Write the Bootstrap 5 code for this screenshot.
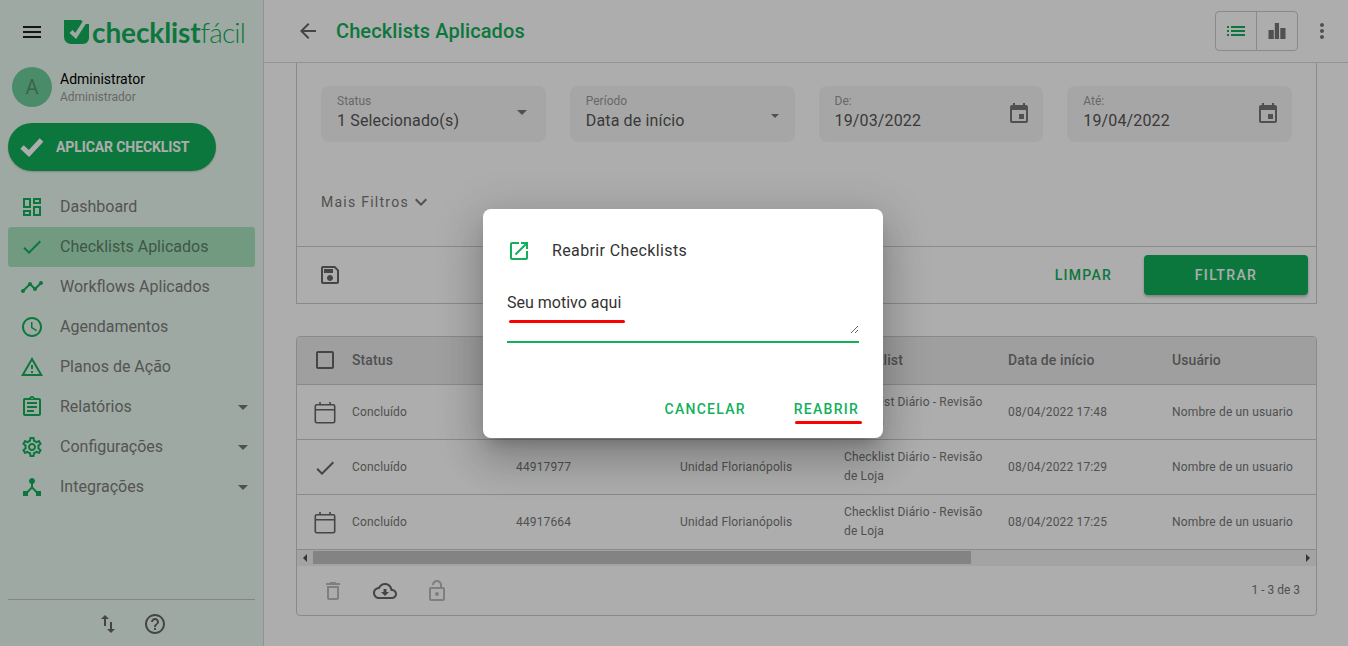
<!DOCTYPE html>
<html lang="pt-BR">
<head>
<meta charset="utf-8">
<title>Checklists Aplicados</title>
<link href="https://cdn.jsdelivr.net/npm/bootstrap@5.3.0/dist/css/bootstrap.min.css" rel="stylesheet">
<style>
html,body{height:646px;overflow:hidden;margin:0;background:#fff;font-family:Roboto,"Liberation Sans",sans-serif;color:rgba(0,0,0,.87)}
.ico{width:24px;height:24px;fill:currentColor;flex:none;display:block}
.shell{height:646px;width:1348px;position:relative}
.side{width:264px;flex:none;background:#eafaf0;border-right:1px solid #d8d8d8;height:646px}
.side-top{height:63px;padding:0 0 0 20px;gap:20px}
.logo-word{font-family:Lato,Roboto,sans-serif;font-size:28px;line-height:32px;color:#12b05b;letter-spacing:-.1px;white-space:nowrap;margin-left:-17px}
.logo-word b{font-weight:700}.logo-word span{font-weight:300;letter-spacing:-.8px}
.who{padding:0 12px;gap:8px;height:48px}
.who-txt{padding-top:2px}
.avatar{width:40px;height:40px;border-radius:50%;background:#6ecf9b;color:#58936f;font-size:20px;flex:none}
.who-name{font-size:14px;line-height:16px;color:#000}
.who-role{font-size:12px;line-height:16px;color:#999;margin-top:2px}
.apply{margin:12px 0 0 8px;width:208px;height:48px;border-radius:24px;background:#12b05b;color:#fff;font-size:14px;font-weight:700;border:0;padding:0 0 0 12px;gap:12px;letter-spacing:-.1px;box-shadow:0 1px 2px rgba(0,0,0,.2)}
.menu{margin-top:16px;padding:0 8px}
.menu-row{height:40px;padding:0 0 0 12px;gap:16px;border-radius:3px;color:#7c7c7c;font-size:16px}
.menu-row .ico{color:#12b05b}
.menu-row.on{background:#a9e4bf;color:#5c8069}
.caret-d{width:0;height:0;border-left:5px solid transparent;border-right:5px solid transparent;border-top:5px solid #777;margin:0 7px 0 auto}
.side-foot{margin:0 8px;border-top:1px solid #c4c4c4;height:47px;gap:23px;color:#666;padding:2px 1px 0 0}
.bar{height:63px;border-bottom:1px solid #d8d8d8;padding:0 14px 0 32px;background:#fff}
.bar-title{font-size:20px;font-weight:500;color:#12b05b;margin-left:16px;letter-spacing:.1px}
.bar-back{color:#666}
.seg{border:1px solid #ccc;border-radius:4px;height:40px;width:83px}
.seg-cell{flex:1;color:#777}.seg-cell+.seg-cell{border-left:1px solid #ccc}
.seg-cell.on{color:#12b05b}
.dots{color:#777;margin-left:12px}
.work{padding:0 31px 0 32px;height:583px;overflow:hidden}
.filt{border:1px solid #ccc;border-top:0;height:241px}
.filt-top{padding:23px 24px 0;gap:24px}
.fld{flex:1;height:56px;background:#f5f5f5;border-radius:8px;padding:8px 16px 0;position:relative}
.fld-l{font-size:12px;line-height:14px;color:#999}
.fld-v{font-size:16px;line-height:24px;color:#555;letter-spacing:.15px;margin-top:1px}
.fld .ico{position:absolute;right:12px;top:16px;color:#777}
.fld .caret-d{position:absolute;right:19px;top:24px;margin:0}
.fld .caret-low{right:16px;top:28px;border-left-width:4.5px;border-right-width:4.5px;border-top-width:4.5px}
.more{padding:48px 24px 0;height:94px;font-size:14px;color:#777;letter-spacing:1.25px;line-height:24px}
.filt-foot{border-top:1px solid #ccc;height:57px;padding:0 8px 0 21px;margin-top:10px}
.save-ico{color:#666}
.btn-clean{font-size:14px;font-weight:500;letter-spacing:1.25px;color:#12b05b}
.btn-go{background:#12b05b;color:#fff;width:164px;height:40px;border-radius:4px;font-size:14px;font-weight:500;letter-spacing:1.35px;margin-left:32px;box-shadow:0 2px 3px rgba(0,0,0,.25)}
.tbl-card{border:1px solid #ccc;border-radius:4px;margin-top:32px;height:280px;overflow:hidden}
.tbl-wrap{overflow:hidden;height:213px}
.grid-t{table-layout:fixed;width:1039px;margin:0;border-collapse:collapse}
.grid-t th,.grid-t td{border-bottom:1px solid #ccc;padding:0;background:transparent;vertical-align:middle;box-shadow:none}
.grid-t th{height:47px;background:#ebebeb;font-size:14px;font-weight:500;color:#777;letter-spacing:.1px}
.grid-t td{height:55px;padding-top:2px;font-size:12px;line-height:19px;color:#777;letter-spacing:.15px}
.grid-t .c0{width:55px;padding-left:16px}.grid-t .cn{width:164px}
.grid-t .c0 .ico{color:#666}
.grid-t td.cl{padding-right:18px;padding-top:0}
.cal-line{fill:none;stroke:currentColor;stroke-width:1.6}
.sbar{height:16px;background:#f1f1f1}
.sbar-thumb{width:658px;height:13px;background:#c1c1c1;margin-top:1px}
.sarrow{width:16px;height:16px}
.sarrow-l{width:0;height:0;border-top:4px solid transparent;border-bottom:4px solid transparent;border-right:4px solid #505050}
.sarrow-r{width:0;height:0;border-top:4px solid transparent;border-bottom:4px solid transparent;border-left:4px solid #505050}
.tbl-foot{height:49px;padding:0 16px 1px 24px;font-size:12px;color:#777;gap:28px}
.tbl-foot .ico{margin-top:2px}
.tbl-foot .faint{color:#bbb}.tbl-foot .dark{color:#666}
.veil{position:absolute;inset:0;background:rgba(0,0,0,.32);padding-left:18px;z-index:5}
.dlg{width:400px;height:229px;background:#fff;border-radius:8px;padding:24px;position:relative;box-shadow:0 11px 15px -7px rgba(0,0,0,.2),0 24px 38px 3px rgba(0,0,0,.14),0 9px 46px 8px rgba(0,0,0,.12)}
.dlg-head{height:36px;gap:21px;color:#333;font-size:16px;letter-spacing:.37px}
.dlg-head .ico{color:#12b05b}
.dlg-field{margin-top:22px;border-bottom:2px solid #12b05b;padding-bottom:7px}
.dlg-area{display:block;width:100%;height:43px;border:0;border-radius:0;padding:0;font-size:16px;line-height:24px;color:#333;background:transparent;outline:0;font-family:Roboto,sans-serif;box-shadow:none}
.dlg-foot{margin-top:57px;gap:48px;font-size:14px;font-weight:500;letter-spacing:1.25px;color:#12b05b;line-height:18px}
.red-a,.red-b{position:absolute;height:3px;border-radius:2px;background:#f00}
.red-a{left:26px;top:111px;width:116px}
.red-b{left:312px;top:212px;width:67px}
</style>
</head>
<body>
<svg width="0" height="0" class="d-none">
<symbol id="i-menu" viewBox="0 0 24 24"><path d="M3 18h18v-2H3v2zm0-5h18v-2H3v2zm0-7v2h18V6H3z"/></symbol>
<symbol id="i-dash" viewBox="0 0 24 24"><path d="M19 5v2h-4V5h4M9 5v6H5V5h4m10 8v6h-4v-6h4M9 17v2H5v-2h4M21 3h-8v6h8V3zM11 3H3v10h8V3zm10 8h-8v10h8V11zm-10 4H3v6h8v-6z"/></symbol>
<symbol id="i-check" viewBox="0 0 24 24"><path d="M9 16.17L4.83 12l-1.42 1.41L9 19 21 7l-1.41-1.41z"/></symbol>
<symbol id="i-time" viewBox="0 0 24 24"><path d="M23 8c0 1.1-.9 2-2 2-.18 0-.35-.02-.51-.07l-3.56 3.55c.05.16.07.34.07.52 0 1.1-.9 2-2 2s-2-.9-2-2c0-.18.02-.36.07-.52l-2.55-2.55c-.16.05-.34.07-.52.07s-.36-.02-.52-.07l-4.55 4.56c.05.16.07.33.07.51 0 1.1-.9 2-2 2s-2-.9-2-2 .9-2 2-2c.18 0 .35.02.51.07l4.56-4.55C8.02 9.36 8 9.18 8 9c0-1.1.9-2 2-2s2 .9 2 2c0 .18-.02.36-.07.52l2.55 2.55c.16-.05.34-.07.52-.07s.36.02.52.07l3.55-3.56C19.02 8.35 19 8.18 19 8c0-1.1.9-2 2-2s2 .9 2 2z"/></symbol>
<symbol id="i-clock" viewBox="0 0 24 24"><path d="M11.99 2C6.47 2 2 6.48 2 12s4.47 10 9.99 10C17.52 22 22 17.52 22 12S17.52 2 11.99 2zM12 20c-4.42 0-8-3.58-8-8s3.58-8 8-8 8 3.58 8 8-3.58 8-8 8zm.5-13H11v6l5.25 3.15.75-1.23-4.5-2.67z"/></symbol>
<symbol id="i-warn" viewBox="0 0 24 24"><path d="M12 5.99L19.53 19H4.47L12 5.99M12 2L1 21h22L12 2zm1 14h-2v2h2v-2zm0-6h-2v4h2v-4z"/></symbol>
<symbol id="i-assign" viewBox="0 0 24 24"><path d="M7 15h7v2H7zm0-4h10v2H7zm0-4h10v2H7zm12-4h-4.18C14.4 1.84 13.3 1 12 1c-1.3 0-2.4.84-2.82 2H5c-.14 0-.27.01-.4.04-.39.08-.74.28-1.01.55-.18.18-.33.4-.43.64-.1.23-.16.49-.16.77v14c0 .27.06.54.16.78s.25.45.43.64c.27.27.62.47 1.01.55.13.02.26.03.4.03h14c1.1 0 2-.9 2-2V5c0-1.1-.9-2-2-2zm-7-.25c.41 0 .75.34.75.75s-.34.75-.75.75-.75-.34-.75-.75.34-.75.75-.75zM19 19H5V5h14v14z"/></symbol>
<symbol id="i-gear" viewBox="0 0 24 24"><path d="M19.43 12.98c.04-.32.07-.64.07-.98 0-.34-.03-.66-.07-.98l2.11-1.65c.19-.15.24-.42.12-.64l-2-3.46c-.09-.16-.26-.25-.44-.25-.06 0-.12.01-.17.03l-2.49 1c-.52-.4-1.08-.73-1.69-.98l-.38-2.65C14.46 2.18 14.25 2 14 2h-4c-.25 0-.46.18-.49.42l-.38 2.65c-.61.25-1.17.59-1.69.98l-2.49-1c-.06-.02-.12-.03-.18-.03-.17 0-.34.09-.43.25l-2 3.46c-.13.22-.07.49.12.64l2.11 1.65c-.04.32-.07.65-.07.98 0 .33.03.66.07.98l-2.11 1.65c-.19.15-.24.42-.12.64l2 3.46c.09.16.26.25.44.25.06 0 .12-.01.17-.03l2.49-1c.52.4 1.08.73 1.69.98l.38 2.65c.03.24.24.42.49.42h4c.25 0 .46-.18.49-.42l.38-2.65c.61-.25 1.17-.59 1.69-.98l2.49 1c.06.02.12.03.18.03.17 0 .34-.09.43-.25l2-3.46c.12-.22.07-.49-.12-.64l-2.11-1.65zm-1.98-1.71c.04.31.05.52.05.73 0 .21-.02.43-.05.73l-.14 1.13.89.7 1.08.84-.7 1.21-1.27-.51-1.04-.42-.9.68c-.43.32-.84.56-1.25.73l-1.06.43-.16 1.13-.2 1.35h-1.4l-.19-1.35-.16-1.13-1.06-.43c-.43-.18-.83-.41-1.23-.71l-.91-.7-1.06.43-1.27.51-.7-1.21 1.08-.84.89-.7-.14-1.13c-.03-.31-.05-.54-.05-.74s.02-.43.05-.73l.14-1.13-.89-.7-1.08-.84.7-1.21 1.27.51 1.04.42.9-.68c.43-.32.84-.56 1.25-.73l1.06-.43.16-1.13.2-1.35h1.39l.19 1.35.16 1.13 1.06.43c.43.18.83.41 1.23.71l.91.7 1.06-.43 1.27-.51.7 1.21-1.07.85-.89.7.14 1.13zM12 8c-2.21 0-4 1.79-4 4s1.79 4 4 4 4-1.79 4-4-1.79-4-4-4zm0 6c-1.1 0-2-.9-2-2s.9-2 2-2 2 .9 2 2-.9 2-2 2z"/></symbol>
<symbol id="i-hub" viewBox="0 0 24 24"><path d="M17 16l-4-4V8.82C14.16 8.4 15 7.3 15 6c0-1.66-1.34-3-3-3S9 4.34 9 6c0 1.3.84 2.4 2 2.82V12l-4 4H3v5h5v-3.05l4-4.2 4 4.2V21h5v-5h-4z"/></symbol>
<symbol id="i-swap" viewBox="0 0 24 24"><path d="M16 17.01V10h-2v7.01h-3L15 21l4-3.99h-3zM9 3L5 6.99h3V14h2V6.99h3L9 3z"/></symbol>
<symbol id="i-help" viewBox="0 0 24 24"><path d="M11 18h2v-2h-2v2zm1-16C6.48 2 2 6.48 2 12s4.48 10 10 10 10-4.48 10-10S17.52 2 12 2zm0 18c-4.41 0-8-3.59-8-8s3.59-8 8-8 8 3.59 8 8-3.59 8-8 8zm0-14c-2.21 0-4 1.79-4 4h2c0-1.1.9-2 2-2s2 .9 2 2c0 2-3 1.75-3 5h2c0-2.25 3-2.5 3-5 0-2.21-1.79-4-4-4z"/></symbol>
<symbol id="i-back" viewBox="0 0 24 24"><path d="M20 11H7.83l5.59-5.59L12 4l-8 8 8 8 1.41-1.41L7.83 13H20v-2z"/></symbol>
<symbol id="i-list" viewBox="0 0 24 24"><path d="M3 13h2v-2H3v2zm0 4h2v-2H3v2zm0-8h2V7H3v2zm4 4h14v-2H7v2zm0 4h14v-2H7v2zM7 7v2h14V7H7z"/></symbol>
<symbol id="i-chart" viewBox="0 0 24 24"><path d="M3.500 11h5.300v9H3.500zM9.800 4H14v16H9.800zM15.300 9h5.200v11h-5.200z"/></symbol>
<symbol id="i-more" viewBox="0 0 24 24"><path d="M12 8c1.1 0 2-.9 2-2s-.9-2-2-2-2 .9-2 2 .9 2 2 2zm0 2c-1.1 0-2 .9-2 2s.9 2 2 2 2-.9 2-2-.9-2-2-2zm0 6c-1.1 0-2 .9-2 2s.9 2 2 2 2-.9 2-2-.9-2-2-2z"/></symbol>
<symbol id="i-event" viewBox="0 0 24 24"><path d="M17 12h-5v5h5v-5zM16 1v2H8V1H6v2H5c-1.11 0-1.99.9-1.99 2L3 19c0 1.1.89 2 2 2h14c1.1 0 2-.9 2-2V5c0-1.1-.9-2-2-2h-1V1h-2zm3 18H5V8h14v11z"/></symbol>
<symbol id="i-cal" viewBox="0 0 24 24"><g class="cal-line"><rect x="2.300" y="3.800" width="19.400" height="18" rx="1.500"/><path d="M2.300 8.800h19.400M7 1v3M17 1v3"/></g></symbol>
<symbol id="i-save" viewBox="0 0 24 24"><path d="M17 3H5c-1.11 0-2 .9-2 2v14c0 1.1.89 2 2 2h14c1.1 0 2-.9 2-2V7l-4-4zm2 16H5V5h11.17L19 7.83V19zm-7-7c-1.66 0-3 1.34-3 3s1.34 3 3 3 3-1.34 3-3-1.34-3-3-3zM6 6h9v4H6z"/></symbol>
<symbol id="i-del" viewBox="0 0 24 24"><path d="M6 19c0 1.1.9 2 2 2h8c1.1 0 2-.9 2-2V7H6v12zM8 9h8v10H8V9zm7.5-5l-1-1h-5l-1 1H5v2h14V4z"/></symbol>
<symbol id="i-cloud" viewBox="0 0 24 24"><path d="M19.35 10.04C18.67 6.59 15.64 4 12 4 9.11 4 6.6 5.64 5.35 8.04 2.34 8.36 0 10.91 0 14c0 3.31 2.69 6 6 6h13c2.76 0 5-2.24 5-5 0-2.64-2.05-4.78-4.65-4.96zM19 18H6c-2.21 0-4-1.79-4-4 0-2.05 1.53-3.76 3.56-3.97l1.07-.11.5-.95C8.08 7.14 9.94 6 12 6c2.62 0 4.88 1.86 5.39 4.43l.3 1.5 1.53.11c1.56.1 2.78 1.41 2.78 2.96 0 1.65-1.35 3-3 3zm-5.55-8h-2.9v3H8l4 4 4-4h-2.55z"/></symbol>
<symbol id="i-lock" viewBox="0 0 24 24"><path d="M12 17c1.1 0 2-.9 2-2s-.9-2-2-2-2 .9-2 2 .9 2 2 2zm6-9h-1V6c0-2.76-2.24-5-5-5S7 3.24 7 6h2c0-1.66 1.34-3 3-3s3 1.34 3 3v2H6c-1.1 0-2 .9-2 2v10c0 1.1.9 2 2 2h12c1.1 0 2-.9 2-2V10c0-1.1-.9-2-2-2zm0 12H6V10h12v10z"/></symbol>
<symbol id="i-open" viewBox="0 0 24 24"><path d="M19 19H5V5h7V3H5c-1.11 0-2 .9-2 2v14c0 1.1.89 2 2 2h14c1.1 0 2-.9 2-2v-7h-2v7zM14 3v2h3.59l-9.83 9.83 1.41 1.41L19 6.41V10h2V3h-7z"/></symbol>
<symbol id="i-down" viewBox="0 0 24 24"><path d="M16.59 8.59L12 13.17 7.41 8.59 6 10l6 6 6-6z"/></symbol>
<symbol id="i-box" viewBox="0 0 24 24"><path d="M19 5v14H5V5h14m0-2H5c-1.1 0-2 .9-2 2v14c0 1.1.9 2 2 2h14c1.1 0 2-.9 2-2V5c0-1.1-.9-2-2-2z"/></symbol>
</svg>
<div class="shell d-flex">
  <aside class="side d-flex flex-column">
    <div class="side-top d-flex align-items-center">
      <svg class="ico" viewBox="0 0 24 24"><use href="#i-menu"/></svg>
      <svg width="25" height="24" viewBox="0 0 25 24" class="flex-none d-block"><path fill="#12b05b" d="M0 0H25V18a6 6 0 0 1-6 6H7a7 7 0 0 1-7-7z"/><path fill="#eafaf0" d="M17 0H25V4H21z"/><path fill="none" stroke="#eafaf0" stroke-width="4" d="M7 11.500l4.700 4.500 9-14"/></svg>
      <div class="logo-word"><b>checklist</b><span>fácil</span></div>
    </div>
    <div class="who d-flex align-items-center">
      <div class="avatar d-flex align-items-center justify-content-center">A</div>
      <div class="who-txt"><div class="who-name">Administrator</div><div class="who-role">Administrador</div></div>
    </div>
    <button class="apply d-flex align-items-center" type="button">
      <svg width="24" height="20" viewBox="0 0 24 20"><path fill="none" stroke="#fff" stroke-width="5" d="M2 10l7 6.500L21.500 3"/></svg>
      <span>APLICAR CHECKLIST</span>
    </button>
    <nav class="menu flex-grow-1">
      <div class="menu-row d-flex align-items-center"><svg class="ico"><use href="#i-dash"/></svg>Dashboard</div>
      <div class="menu-row on d-flex align-items-center"><svg class="ico"><use href="#i-check"/></svg>Checklists Aplicados</div>
      <div class="menu-row d-flex align-items-center"><svg class="ico"><use href="#i-time"/></svg>Workflows Aplicados</div>
      <div class="menu-row d-flex align-items-center"><svg class="ico"><use href="#i-clock"/></svg>Agendamentos</div>
      <div class="menu-row d-flex align-items-center"><svg class="ico"><use href="#i-warn"/></svg>Planos de Ação</div>
      <div class="menu-row d-flex align-items-center"><svg class="ico"><use href="#i-assign"/></svg>Relatórios<span class="caret-d"></span></div>
      <div class="menu-row d-flex align-items-center"><svg class="ico"><use href="#i-gear"/></svg>Configurações<span class="caret-d"></span></div>
      <div class="menu-row d-flex align-items-center"><svg class="ico"><use href="#i-hub"/></svg>Integrações<span class="caret-d"></span></div>
    </nav>
    <div class="side-foot d-flex align-items-center justify-content-center">
      <svg class="ico"><use href="#i-swap"/></svg>
      <svg class="ico"><use href="#i-help"/></svg>
    </div>
  </aside>
  <main class="flex-grow-1" style="min-width:0">
    <header class="bar d-flex align-items-center">
      <svg class="ico bar-back"><use href="#i-back"/></svg>
      <div class="bar-title">Checklists Aplicados</div>
      <div class="seg d-flex ms-auto">
        <div class="seg-cell on d-flex align-items-center justify-content-center"><svg class="ico"><use href="#i-list"/></svg></div>
        <div class="seg-cell d-flex align-items-center justify-content-center"><svg class="ico"><use href="#i-chart"/></svg></div>
      </div>
      <svg class="ico dots"><use href="#i-more"/></svg>
    </header>
    <div class="work">
      <section class="filt">
        <div class="filt-top d-flex">
          <div class="fld"><div class="fld-l">Status</div><div class="fld-v">1 Selecionado(s)</div><span class="caret-d"></span></div>
          <div class="fld"><div class="fld-l">Período</div><div class="fld-v">Data de início</div><span class="caret-d caret-low"></span></div>
          <div class="fld"><div class="fld-l">De:</div><div class="fld-v">19/03/2022</div><svg class="ico"><use href="#i-event"/></svg></div>
          <div class="fld"><div class="fld-l">Até:</div><div class="fld-v">19/04/2022</div><svg class="ico"><use href="#i-event"/></svg></div>
        </div>
        <div class="more d-flex align-items-start"><span>Mais Filtros</span><svg class="ico"><use href="#i-down"/></svg></div>
        <div class="filt-foot d-flex align-items-center">
          <svg class="ico save-ico"><use href="#i-save"/></svg>
          <span class="btn-clean ms-auto">LIMPAR</span>
          <div class="btn-go d-flex align-items-center justify-content-center">FILTRAR</div>
        </div>
      </section>
      <section class="tbl-card">
        <div class="tbl-wrap">
          <table class="table grid-t">
            <thead><tr>
              <th class="c0"><svg class="ico"><use href="#i-box"/></svg></th>
              <th class="cn">Status</th><th class="cn">Código</th><th class="cn">Unidade</th><th class="cn">Checklist</th><th class="cn">Data de início</th><th class="cn">Usuário</th>
            </tr></thead>
            <tbody>
              <tr><td class="c0"><svg class="ico"><use href="#i-cal"/></svg></td><td>Concluído</td><td>44918002</td><td>Unidad Florianópolis</td><td class="cl">Checklist Diário - Revisão de Loja</td><td>08/04/2022 17:48</td><td>Nombre de un usuario</td></tr>
              <tr><td class="c0"><svg class="ico"><use href="#i-check"/></svg></td><td>Concluído</td><td>44917977</td><td>Unidad Florianópolis</td><td class="cl">Checklist Diário - Revisão de Loja</td><td>08/04/2022 17:29</td><td>Nombre de un usuario</td></tr>
              <tr><td class="c0"><svg class="ico"><use href="#i-cal"/></svg></td><td>Concluído</td><td>44917664</td><td>Unidad Florianópolis</td><td class="cl">Checklist Diário - Revisão de Loja</td><td>08/04/2022 17:25</td><td>Nombre de un usuario</td></tr>
            </tbody>
          </table>
        </div>
        <div class="sbar d-flex align-items-start">
          <div class="sarrow d-flex align-items-center justify-content-center"><span class="sarrow-l"></span></div>
          <div class="sbar-thumb"></div>
          <div class="sarrow ms-auto d-flex align-items-center justify-content-center"><span class="sarrow-r"></span></div>
        </div>
        <div class="tbl-foot d-flex align-items-center">
          <svg class="ico faint"><use href="#i-del"/></svg>
          <svg class="ico dark"><use href="#i-cloud"/></svg>
          <svg class="ico faint"><use href="#i-lock"/></svg>
          <span class="ms-auto">1 - 3 de 3</span>
        </div>
      </section>
    </div>
  </main>
  <div class="veil d-flex align-items-center justify-content-center">
    <div class="dlg" role="dialog">
      <div class="dlg-head d-flex align-items-center"><svg class="ico"><use href="#i-open"/></svg><span>Reabrir Checklists</span></div>
      <div class="dlg-field"><textarea class="dlg-area" rows="2">Seu motivo aqui</textarea></div>
      <div class="dlg-foot d-flex justify-content-end"><span>CANCELAR</span><span>REABRIR</span></div>
      <span class="red-a"></span><span class="red-b"></span>
    </div>
  </div>
</div>
<script src="https://cdn.jsdelivr.net/npm/bootstrap@5.3.0/dist/js/bootstrap.bundle.min.js"></script>
</body>
</html>
